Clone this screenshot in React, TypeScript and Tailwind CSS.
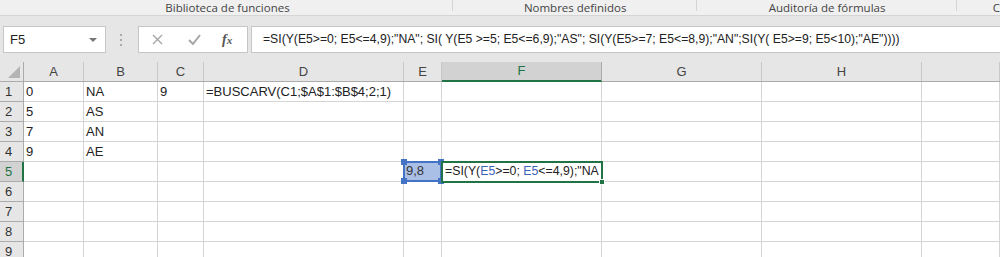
import React from "react";

const cols = [
  { name: "A", w: "w-[60px]" },
  { name: "B", w: "w-[74px]" },
  { name: "C", w: "w-[46px]" },
  { name: "D", w: "w-[200px]" },
  { name: "E", w: "w-[38px]" },
  { name: "F", w: "w-[160px]" },
  { name: "G", w: "w-[160px]" },
  { name: "H", w: "w-[160px]" },
  { name: "", w: "flex-1" },
];

const data: Record<string, string> = {
  A1: "0",
  B1: "NA",
  C1: "9",
  D1: "=BUSCARV(C1;$A$1:$B$4;2;1)",
  A2: "5",
  B2: "AS",
  A3: "7",
  B3: "AN",
  A4: "9",
  B4: "AE",
};

const cellFont = { fontFamily: '"Liberation Sans", Arial, sans-serif' };

function Handle({ pos }: { pos: string }) {
  return <div className={`absolute w-[6px] h-[6px] bg-[#4472c4] ${pos}`} />;
}

export default function App() {
  const rows = [1, 2, 3, 4, 5, 6, 7, 8, 9];
  return (
    <div className="w-[1000px] h-[257px] overflow-hidden bg-[#e6e6e6] text-[#222]" style={cellFont}>
      {/* ribbon group labels */}
      <div className="h-[16px] bg-[#f0f0f0] border-b border-[#d5d5d5] flex items-start text-[11.5px] leading-[15px] text-[#444]" style={{ fontFamily: '"Open Sans", "Noto Sans", sans-serif' }}>
        <div className="w-[454px] h-[15px] flex justify-center relative">
          <span className="pl-[2px]">Biblioteca de funciones</span>
          <span className="absolute right-0 top-0 h-[11px] w-[1px] bg-[#d5d5d5]" />
        </div>
        <div className="w-[245px] h-[15px] flex justify-center relative">
          <span>Nombres definidos</span>
          <span className="absolute right-0 top-0 h-[11px] w-[1px] bg-[#d5d5d5]" />
        </div>
        <div className="w-[260px] h-[15px] flex justify-center relative">
          <span>Auditoría de fórmulas</span>
          <span className="absolute right-0 top-0 h-[11px] w-[1px] bg-[#d5d5d5]" />
        </div>
        <div className="pl-[36px]">C</div>
      </div>

      {/* formula bar */}
      <div className="h-[46px] flex items-start pt-[10px]">
        <div className="ml-[3px] w-[103px] h-[27px] bg-white border border-[#c6c6c6] flex items-center justify-between pl-[6px] pr-[8px] text-[13px]">
          <span>F5</span>
          <span className="w-0 h-0 border-l-[4px] border-r-[4px] border-t-[4px] border-l-transparent border-r-transparent border-t-[#777]" />
        </div>
        <div className="w-[29px] h-[27px] flex flex-col items-center justify-center gap-[3px]">
          <span className="w-[2px] h-[2px] bg-[#aaa]" />
          <span className="w-[2px] h-[2px] bg-[#aaa]" />
          <span className="w-[2px] h-[2px] bg-[#aaa]" />
        </div>
        <div className="ml-[3px] w-[110px] h-[27px] bg-white border border-[#c6c6c6] flex items-center">
          <svg className="ml-[13px]" width="11" height="11" viewBox="0 0 11 11">
            <path d="M1 1 L10 10 M10 1 L1 10" stroke="#a6a6a6" strokeWidth="1.4" fill="none" />
          </svg>
          <svg className="ml-[25px]" width="13" height="11" viewBox="0 0 13 11">
            <path d="M1 6 L5 10 L12 1" stroke="#a6a6a6" strokeWidth="2" fill="none" />
          </svg>
          <span className="ml-[21px] italic text-[14px] text-[#555] font-bold" style={{ fontFamily: '"Liberation Serif", serif' }}>
            f<span className="text-[11px]">x</span>
          </span>
        </div>
        <div className="ml-[3px] flex-1 h-[27px] bg-white border border-[#c6c6c6] border-r-0 flex items-center pl-[11px] text-[12.2px] whitespace-nowrap">
          =SI(Y(E5&gt;=0; E5&lt;=4,9);"NA"; SI( Y(E5 &gt;=5; E5&lt;=6,9);"AS"; SI(Y(E5&gt;=7; E5&lt;=8,9);"AN";SI(Y( E5&gt;=9; E5&lt;10);"AE"))))
        </div>
      </div>

      {/* sheet */}
      <div className="flex flex-col text-[13px]">
        <div className="flex h-[20px] bg-[#e6e6e6] border-b border-[#ababab]">
          <div className="w-[24px] shrink-0 border-r border-[#ababab] relative">
            <div className="absolute left-[8px] top-[4px] w-0 h-0" style={{ borderBottom: "12px solid #b4b4b4", borderLeft: "12px solid transparent" }} />
          </div>
          {cols.map((c) =>
            c.name === "F" ? (
              <div key={c.name} className={`${c.w} shrink-0 bg-[#d2d2d2] border-r border-[#ababab] border-b-2 border-b-[#217346] -mb-[1px] flex items-center justify-center text-[#217346]`}>
                {c.name}
              </div>
            ) : (
              <div key={c.name || "x"} className={`${c.w} shrink-0 border-r border-[#c8c8c8] flex items-center justify-center text-[#444]`}>
                {c.name}
              </div>
            )
          )}
        </div>
        {rows.map((r) => (
          <div key={r} className="flex h-[20px] bg-white">
            <div className={`w-[24px] shrink-0 border-b flex items-center pl-[5px] ${r === 5 ? "bg-[#d2d2d2] text-[#217346] border-r-2 border-r-[#217346] border-b-[#ababab]" : "bg-[#e6e6e6] text-[#333] border-r border-[#ababab]"}`}>
              {r}
            </div>
            {cols.map((c) => {
              const key = c.name + r;
              if (key === "E5") {
                return (
                  <div key={key} className={`${c.w} shrink-0 border-r border-b border-[#d4d4d4] relative`}>
                    <div className="absolute -left-[1px] -top-[1px] w-[39px] h-[21px] border-2 border-[#4472c4] bg-[#a9bfe6] pl-[1px] leading-[16px] text-[#333]">
                      9,8
                    </div>
                    <Handle pos="-left-[3px] -top-[3px]" />
                    <Handle pos="-right-[3px] -top-[3px]" />
                    <Handle pos="-left-[3px] -bottom-[3px]" />
                    <Handle pos="-right-[3px] -bottom-[3px]" />
                  </div>
                );
              }
              if (key === "F5") {
                return (
                  <div key={key} className={`${c.w} shrink-0 border-r border-b border-[#d4d4d4] relative`}>
                    <div className="absolute -left-[1px] -top-[1px] w-[162px] h-[22px] border-2 border-[#217346] bg-white pl-[2px] leading-[17px] text-[12.3px] whitespace-nowrap overflow-hidden">
                      =SI(Y(<span className="text-[#3a63b8]">E5</span>&gt;=0; <span className="text-[#3a63b8]">E5</span>&lt;=4,9);"NA
                    </div>
                    <div className="absolute -right-[4px] -bottom-[4px] w-[6px] h-[6px] bg-[#217346] border border-white" />
                  </div>
                );
              }
              return (
                <div key={key} className={`${c.w} shrink-0 border-r border-b border-[#d4d4d4] flex items-center pl-[2px] whitespace-nowrap`}>
                  {data[key] ?? ""}
                </div>
              );
            })}
          </div>
        ))}
      </div>
    </div>
  );
}
